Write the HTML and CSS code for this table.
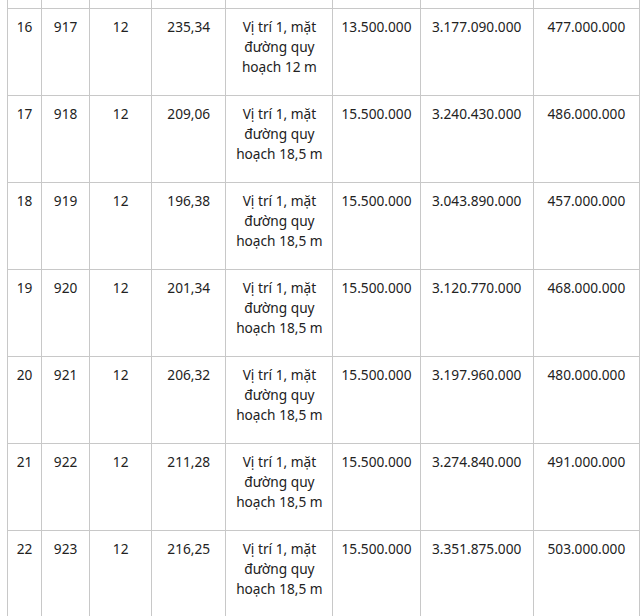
FILE: index.html
```html
<!DOCTYPE html>
<html lang="vi">
<head>
<meta charset="utf-8">
<link rel="stylesheet" href="styles.css">
</head>
<body>
<table class="price-table">
  <colgroup>
    <col class="c1"><col class="c2"><col class="c3"><col class="c4"><col class="c5"><col class="c6"><col class="c7"><col class="c8">
  </colgroup>
  <tbody>
    <tr class="cut"><td></td><td></td><td></td><td></td><td></td><td></td><td></td><td></td></tr>
    <tr><td>16</td><td>917</td><td>12</td><td>235,34</td><td>Vị trí 1, mặt đường quy hoạch 12 m</td><td>13.500.000</td><td>3.177.090.000</td><td>477.000.000</td></tr>
    <tr><td>17</td><td>918</td><td>12</td><td>209,06</td><td>Vị trí 1, mặt đường quy hoạch 18,5 m</td><td>15.500.000</td><td>3.240.430.000</td><td>486.000.000</td></tr>
    <tr><td>18</td><td>919</td><td>12</td><td>196,38</td><td>Vị trí 1, mặt đường quy hoạch 18,5 m</td><td>15.500.000</td><td>3.043.890.000</td><td>457.000.000</td></tr>
    <tr><td>19</td><td>920</td><td>12</td><td>201,34</td><td>Vị trí 1, mặt đường quy hoạch 18,5 m</td><td>15.500.000</td><td>3.120.770.000</td><td>468.000.000</td></tr>
    <tr><td>20</td><td>921</td><td>12</td><td>206,32</td><td>Vị trí 1, mặt đường quy hoạch 18,5 m</td><td>15.500.000</td><td>3.197.960.000</td><td>480.000.000</td></tr>
    <tr><td>21</td><td>922</td><td>12</td><td>211,28</td><td>Vị trí 1, mặt đường quy hoạch 18,5 m</td><td>15.500.000</td><td>3.274.840.000</td><td>491.000.000</td></tr>
    <tr><td>22</td><td>923</td><td>12</td><td>216,25</td><td>Vị trí 1, mặt đường quy hoạch 18,5 m</td><td>15.500.000</td><td>3.351.875.000</td><td>503.000.000</td></tr>
  </tbody>
</table>
</body>
</html>
```
FILE: styles.css
```css
html, body {
  margin: 0;
  padding: 0;
  background: #fff;
}
body {
  padding-left: 7px;
  overflow: hidden;
  height: 616px;
}
.price-table {
  border-collapse: collapse;
  table-layout: fixed;
  width: 633px;
  font-family: "Noto Sans", "Open Sans", sans-serif;
  font-size: 13.7px;
  line-height: 20px;
  color: #222;
}
.c1 { width: 34px; }
.c2 { width: 48px; }
.c3 { width: 62px; }
.c4 { width: 74px; }
.c5 { width: 107px; }
.c6 { width: 87px; }
.c7 { width: 113px; }
.c8 { width: 106px; }
.price-table td {
  border: 1px solid #c8c8c8;
  padding: 8px 4px 18px;
  text-align: center;
  vertical-align: top;
}
.price-table .cut td {
  border-top: 0;
  height: 8px;
  padding: 0;
}
```
